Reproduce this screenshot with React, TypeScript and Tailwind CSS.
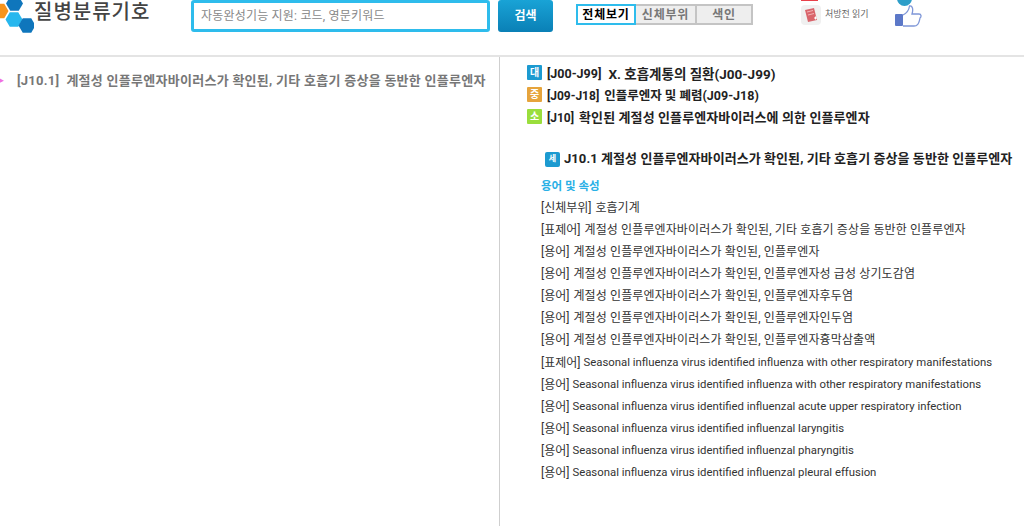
const terms = [
  ["[표제어]", "계절성 인플루엔자바이러스가 확인된, 기타 호흡기 증상을 동반한 인플루엔자"],
  ["[용어]", "계절성 인플루엔자바이러스가 확인된, 인플루엔자"],
  ["[용어]", "계절성 인플루엔자바이러스가 확인된, 인플루엔자성 급성 상기도감염"],
  ["[용어]", "계절성 인플루엔자바이러스가 확인된, 인플루엔자후두염"],
  ["[용어]", "계절성 인플루엔자바이러스가 확인된, 인플루엔자인두염"],
  ["[용어]", "계절성 인플루엔자바이러스가 확인된, 인플루엔자흉막삼출액"],
];
const english = [
  ["[표제어]", "Seasonal influenza virus identified influenza with other respiratory manifestations"],
  ["[용어]", "Seasonal influenza virus identified influenza with other respiratory manifestations"],
  ["[용어]", "Seasonal influenza virus identified influenzal acute upper respiratory infection"],
  ["[용어]", "Seasonal influenza virus identified influenzal laryngitis"],
  ["[용어]", "Seasonal influenza virus identified influenzal pharyngitis"],
  ["[용어]", "Seasonal influenza virus identified influenzal pleural effusion"],
];

function Hex({ x, y, fill }: { x: number; y: number; fill: string }) {
  const r = 8.5;
  const h = 7.2;
  const pts = [[x - r, y], [x - r / 2, y - h], [x + r / 2, y - h], [x + r, y], [x + r / 2, y + h], [x - r / 2, y + h]]
    .map((p) => p.join(",")).join(" ");
  return <polygon points={pts} fill={fill} />;
}

function Crumb({ color, mark, code, title, codeClass, titleClass }: { color: string; mark: string; code: string; title: string; codeClass: string; titleClass: string }) {
  return (
    <div className="flex h-[22px] items-center">
      <span className={`mr-[5px] flex h-[15px] w-[15px] -translate-y-[2px] items-center justify-center rounded-[1px] text-[10px] font-bold text-white ${color}`}>{mark}</span>
      <span className={`font-bold text-[#222] ${codeClass}`}>{code}</span>
      <span className={`font-bold text-[#222] ${titleClass}`}>{title}</span>
    </div>
  );
}

export default function App() {
  return (
    <div className="flex h-[526px] w-[1024px] flex-col overflow-hidden bg-white font-['Roboto','Noto_Sans_CJK_KR',sans-serif] text-[#333]">
      <header className="flex h-[57px] shrink-0 items-start border-b-2 border-[#e4e4e4]">
        <svg width="34" height="34" viewBox="0 0 34 34" className="shrink-0">
          <Hex x={0} y={11} fill="#f7941d" />
          <Hex x={14.5} y={3.500} fill="#0f76bc" />
          <Hex x={14} y={19.500} fill="#27b7ee" />
          <Hex x={27} y={25.500} fill="#0f76bc" />
        </svg>
        <div className="mt-[-3px] w-[157px] shrink-0 text-[20px] font-medium tracking-[1px] text-[#444]">질병분류기호</div>
        <div className="flex h-[32px] w-[299px] shrink-0 items-center rounded-[3px] border-[3px] border-[#2ebcec] pl-[7px] text-[12px] tracking-[0.2px] text-[#888]">자동완성기능 지원: 코드, 영문키워드</div>
        <button className="ml-[8px] h-[32px] w-[55px] shrink-0 rounded-[3px] bg-gradient-to-b from-[#19a3d6] to-[#0a80b6] text-[12px] font-bold text-white">검색</button>
        <div className="ml-[23px] mt-[4px] flex h-[21px] shrink-0 text-[12px] font-bold tracking-[0.8px]">
          <div className="flex w-[60px] items-center justify-center border-2 border-[#2ebcec] text-black">전체보기</div>
          <div className="flex w-[59px] items-center justify-center border-y-2 border-[#c4c4c4] bg-[#eeeeee] text-[#777]">신체부위</div>
          <div className="flex w-[58px] items-center justify-center border-2 border-[#c4c4c4] bg-[#eeeeee] text-[#777]">색인</div>
        </div>
        <div className="relative ml-[48px] mt-[5px] flex shrink-0 items-center">
          <span className="absolute left-0 top-[-5px] h-[1px] w-[17px] bg-[#e8404a]" />
          <svg width="20" height="20" viewBox="0 0 20 20" className="shrink-0">
            <rect width="20" height="20" rx="4" fill="#f0f0f0" />
            <path d="M4 5l9-2 3 12-9 2z" fill="#d9656c" />
            <path d="M6 7l6-1.500M7 10l6-1.500" stroke="#f3b5b8" />
            <path d="M13 13h3M14.500 11.500v3" stroke="#fff" />
          </svg>
          <span className="ml-[4px] text-[9px] text-[#666]">처방전 읽기</span>
        </div>
        <div className="relative ml-[26px] mt-[5px] shrink-0">
          <span className="absolute left-[2px] top-[-14px] h-[15px] w-[15px] rounded-full bg-[#2d9ec9]" />
          <svg width="27" height="22" viewBox="0 0 27 22">
            <rect x="0" y="9" width="8" height="12" rx="1" fill="#5c78c8" />
            <path d="M8 10c4-2 6-5 6.500-9 3-.5 4 3 2.500 8h7c2.500 0 2.500 3 1 4-.5 3-1.500 6-3 7-.5 1-1 1-3 1H8" fill="#fff" stroke="#7f97d8" strokeWidth="1.300" />
          </svg>
        </div>
      </header>
      <main className="flex min-h-0 flex-1">
        <aside className="w-[500px] shrink-0 border-r border-[#cfcfcf] pl-[17px] pt-[14px]">
          <div className="relative whitespace-nowrap text-[13px] font-bold tracking-[0.27px] text-[#777]">
            <span className="absolute left-[-18px] top-[3px] text-[9px] leading-[12px] text-[#f070e0]">▸</span>
            [J10.1]&nbsp; 계절성 인플루엔자바이러스가 확인된, 기타 호흡기 증상을 동반한 인플루엔자
          </div>
        </aside>
        <section className="min-w-0 flex-1 pl-[27px] pt-[6px]">
          <Crumb color="bg-[#1c9ad0]" mark="대" code="[J00-J99]" title="X. 호흡계통의 질환(J00-J99)" codeClass="text-[12.5px]" titleClass="ml-[7px] text-[13.5px]" />
          <Crumb color="bg-[#e6a43c]" mark="중" code="[J09-J18]" title="인플루엔자 및 폐렴(J09-J18)" codeClass="text-[12px]" titleClass="ml-[5px] text-[12.5px]" />
          <Crumb color="bg-[#9ade3c]" mark="소" code="[J10]" title="확인된 계절성 인플루엔자바이러스에 의한 인플루엔자" codeClass="text-[12px]" titleClass="ml-[5px] text-[13px] tracking-[0.1px]" />
          <div className="ml-[18px] mt-[20px] flex h-[20px] items-center whitespace-nowrap text-[13px] font-bold tracking-[0.07px] text-[#222]">
            <span className="mr-[4px] flex h-[15px] w-[15px] items-center justify-center rounded-[2px] bg-[#1c9ad0] text-[8px] text-white">세</span>
            J10.1 계절성 인플루엔자바이러스가 확인된, 기타 호흡기 증상을 동반한 인플루엔자
          </div>
          <div className="ml-[14px] mt-[7px] text-[12px]">
            <div className="flex h-[21px] items-center text-[11.5px] font-bold text-[#2ab0e6]">용어 및 속성</div>
            <div className="flex h-[22px] items-center">[신체부위]<span className="ml-[4px]">호흡기계</span></div>
            {terms.map(([k, v], i) => (
              <div key={i} className="flex h-[22px] items-center whitespace-nowrap"><span className="mr-[4px]">{k}</span><span className="tracking-[0.12px]">{v}</span></div>
            ))}
            <div className="mt-[1px]">
              {english.map(([k, v], i) => (
                <div key={i} className="flex h-[22px] items-center whitespace-nowrap"><span className="mr-[3px]">{k}</span><span className="text-[11.35px]">{v}</span></div>
              ))}
            </div>
          </div>
        </section>
      </main>
    </div>
  );
}
